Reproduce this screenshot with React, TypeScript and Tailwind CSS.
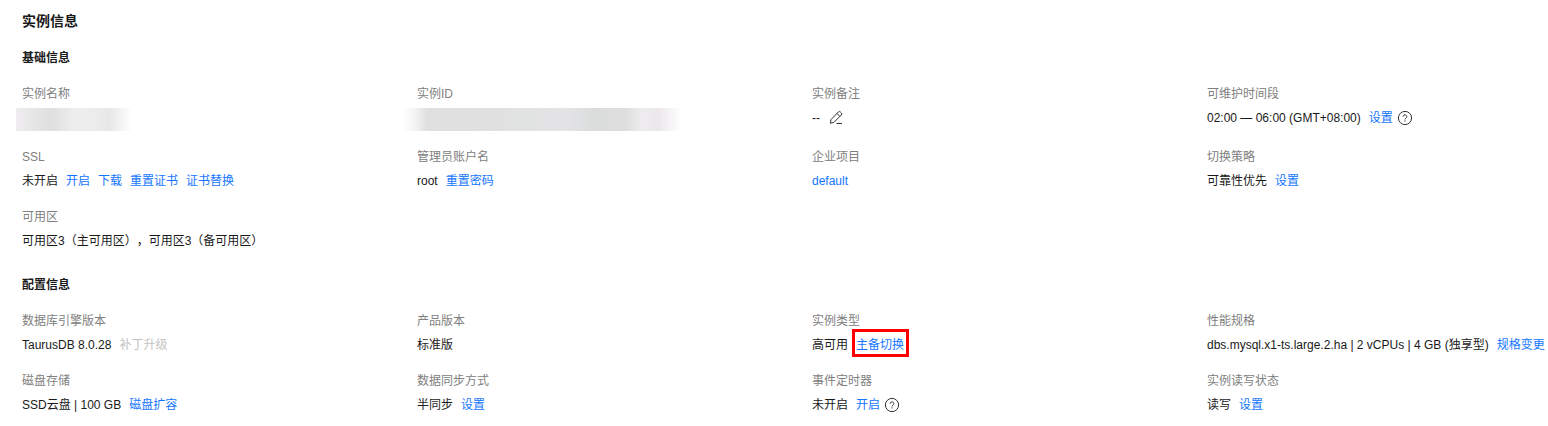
import * as React from 'react';
import { clsx } from 'clsx';

function EditIcon() {
  return (
    <svg viewBox="0 0 16 16" className="h-4 w-4" fill="none" stroke="currentColor" strokeLinejoin="round" aria-hidden="true">
      <path d="M2.3 13.2 3 9.6 10.3 2a1.5 1.5 0 0 1 2.1 0l.9.9a1.5 1.5 0 0 1 0 2.1L5.8 12.5z" />
      <path d="M9 3.5 11.8 6.3M8.5 13.5H14" />
    </svg>
  );
}

function HelpIcon() {
  return (
    <svg viewBox="0 0 16 16" className="h-4 w-4" fill="none" stroke="currentColor" aria-hidden="true">
      <circle cx="8" cy="8" r="6.6" />
      <path d="M6.2 6.7a1.8 1.8 0 1 1 2.8 1.4c-.7.4-1 .7-1 1.3" />
      <path d="M8 10.3v1.2" />
    </svg>
  );
}

interface ActionProps {
  children: React.ReactNode;
  disabled?: boolean;
  highlighted?: boolean;
}

function Action({ children, disabled, highlighted }: ActionProps) {
  return (
    <button
      type="button"
      disabled={disabled}
      className={clsx('relative', disabled ? 'text-[#c2c2c2]' : 'cursor-pointer text-[#1476ff]')}
    >
      {children}
      {highlighted && (
        <span className="pointer-events-none absolute -top-1 -right-[5px] bottom-0 -left-1 border-3 border-[#ff0000]" />
      )}
    </button>
  );
}

function IconButton({ label, children }: { label: string; children: React.ReactNode }) {
  return (
    <button type="button" aria-label={label} className="cursor-pointer text-[#333333]">
      {children}
    </button>
  );
}

function Field({ label, children }: { label: string; children: React.ReactNode }) {
  return (
    <div className="min-w-0 whitespace-nowrap">
      <dt className="h-6 text-[#808080]">{label}</dt>
      <dd className="flex min-h-6 items-center gap-2">{children}</dd>
    </div>
  );
}

function Section({ title, children }: { title: string; children: React.ReactNode }) {
  return (
    <section>
      <h3 className="font-bold">{title}</h3>
      <dl className="mt-3 grid grid-cols-4 gap-x-[54px] gap-y-3">{children}</dl>
    </section>
  );
}

export default function App() {
  return (
    <main className="bg-white pt-[9px] pb-[9px] pl-[22px] font-['Liberation_Sans','Noto_Sans_CJK_SC',sans-serif] text-xs leading-6 text-[#191919] [text-spacing-trim:space-all]">
      <h2 className="text-sm leading-6 font-bold">实例信息</h2>
      <div className="mt-[13px] flex flex-col gap-5">
        <Section title="基础信息">
          <Field label="实例名称">
            <span className="mt-[2px] mb-[2px] -ml-[6px] h-[23px] w-[116px] bg-[linear-gradient(to_right,#efedef_0%,#dfdfdf_30%,#ededed_50%,#ececec_68%,#e7e7e7_80%,#ffffff_100%)]" />
          </Field>
          <Field label="实例ID">
            <span className="mt-[2px] mb-[2px] -ml-[15px] h-[23px] w-[279px] bg-[linear-gradient(to_right,#ffffff_0%,#f6f6f6_4%,#e0e0e0_9%,#e0e0e1_25%,#e1e2e2_45%,#e4e4e7_58%,#dadcdb_70%,#dedede_80%,#eeecee_86%,#ebe7eb_92%,#ffffff_100%)]" />
          </Field>
          <Field label="实例备注">
            <span>--</span>
            <IconButton label="编辑">
              <EditIcon />
            </IconButton>
          </Field>
          <Field label="可维护时间段">
            <span>02:00 — 06:00 (GMT+08:00)</span>
            <div className="flex items-center gap-1">
              <Action>设置</Action>
              <IconButton label="帮助">
                <HelpIcon />
              </IconButton>
            </div>
          </Field>
          <Field label="SSL">
            <span>未开启</span>
            <Action>开启</Action>
            <Action>下载</Action>
            <Action>重置证书</Action>
            <Action>证书替换</Action>
          </Field>
          <Field label="管理员账户名">
            <span>root</span>
            <Action>重置密码</Action>
          </Field>
          <Field label="企业项目">
            <a href="#default" className="text-[#1476ff]">default</a>
          </Field>
          <Field label="切换策略">
            <span>可靠性优先</span>
            <Action>设置</Action>
          </Field>
          <Field label="可用区">
            <span>可用区3（主可用区），可用区3（备可用区）</span>
          </Field>
        </Section>

        <Section title="配置信息">
          <Field label="数据库引擎版本">
            <span>TaurusDB 8.0.28</span>
            <Action disabled>补丁升级</Action>
          </Field>
          <Field label="产品版本">
            <span>标准版</span>
          </Field>
          <Field label="实例类型">
            <span>高可用</span>
            <Action highlighted>主备切换</Action>
          </Field>
          <Field label="性能规格">
            <span>dbs.mysql.x1-ts.large.2.ha | 2 vCPUs | 4 GB (独享型)</span>
            <Action>规格变更</Action>
          </Field>
          <Field label="磁盘存储">
            <span>SSD云盘 | 100 GB</span>
            <Action>磁盘扩容</Action>
          </Field>
          <Field label="数据同步方式">
            <span>半同步</span>
            <Action>设置</Action>
          </Field>
          <Field label="事件定时器">
            <span>未开启</span>
            <div className="flex items-center gap-1">
              <Action>开启</Action>
              <IconButton label="帮助">
                <HelpIcon />
              </IconButton>
            </div>
          </Field>
          <Field label="实例读写状态">
            <span>读写</span>
            <Action>设置</Action>
          </Field>
        </Section>
      </div>
    </main>
  );
}
